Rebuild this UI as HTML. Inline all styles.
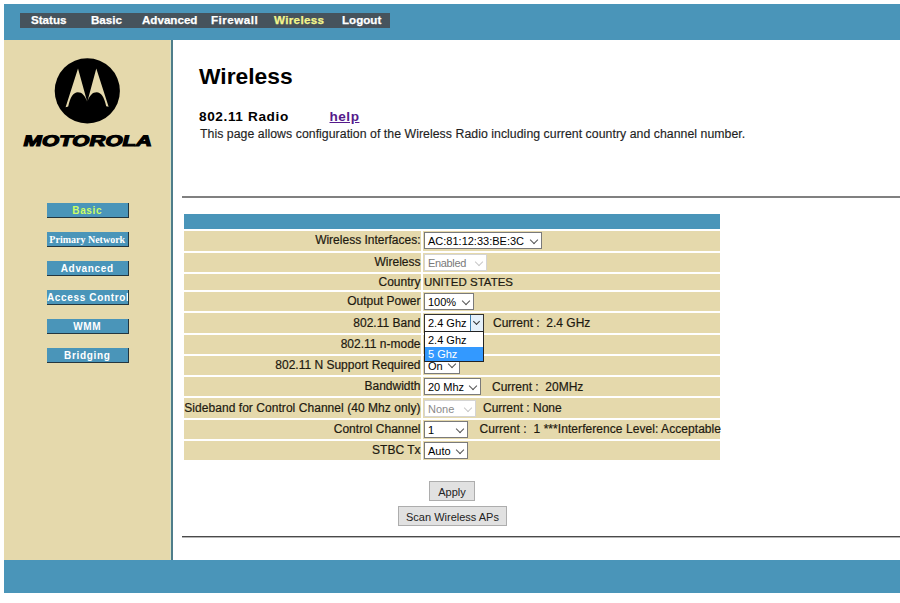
<!DOCTYPE html>
<html><head><meta charset="utf-8">
<style>
html,body{margin:0;padding:0;background:#fff;}
body{width:900px;height:603px;overflow:hidden;position:relative;font-family:"Liberation Sans",sans-serif;color:#000;}
.a{position:absolute;}
.t{position:absolute;white-space:nowrap;line-height:1;}
#hdr{left:4px;top:4px;width:896px;height:36px;background:#4a95b9;}
#nav{left:20px;top:13px;width:370px;height:15px;background:#46535c;}
.nv{position:absolute;top:13.4px;font-weight:bold;font-size:11.6px;color:#fff;-webkit-text-stroke:0.25px currentColor;line-height:13px;white-space:nowrap;}
#side{left:4px;top:40px;width:167px;height:520px;background:#e5d9ac;}
#vl{left:171px;top:40px;width:2px;height:520px;background:#4f7d8a;border-left:1px solid #dde2c6;margin-left:-1px;}
#ftr{left:4px;top:560px;width:896px;height:33px;background:#4a95b9;}
.sb{position:absolute;left:47px;width:80.5px;height:13.5px;background:#4a95b9;border-right:1.5px solid #23363f;border-bottom:1.5px solid #23363f;color:#fff;font-weight:bold;font-size:10px;letter-spacing:0.65px;line-height:16.5px;text-align:center;white-space:nowrap;overflow:hidden;}
.hr{position:absolute;left:182px;width:718px;height:2px;background:#808080;}
.row{position:absolute;left:184px;width:536px;background:#e5d9ac;}
.lab{position:absolute;left:184px;width:236.5px;text-align:right;font-size:12px;line-height:1;white-space:nowrap;color:#1e1a10;-webkit-text-stroke:0.2px #1e1a10;}
.sel{position:absolute;left:424px;height:15px;border:1px solid #7a7a7a;background:#fff;font-size:11px;line-height:15px;color:#000;box-sizing:content-box;}
.sel span{position:absolute;left:3px;top:1px;white-space:nowrap;}
.sel i{position:absolute;right:4px;top:3.5px;width:5px;height:5px;border-right:1px solid #555;border-bottom:1px solid #555;transform:rotate(45deg);}
.val{position:absolute;font-size:12px;line-height:1;white-space:nowrap;color:#1e1a10;-webkit-text-stroke:0.2px #1e1a10;}
.btn{position:absolute;background:#e1e1e1;border:1px solid #adadad;font-size:11px;line-height:20px;text-align:center;color:#222;box-sizing:border-box;}
</style></head><body>
<div id="hdr" class="a"></div>
<div id="nav" class="a"></div>
<div class="nv" style="left:31px">Status</div>
<div class="nv" style="left:91px">Basic</div>
<div class="nv" style="left:142px">Advanced</div>
<div class="nv" style="left:211px;letter-spacing:0.5px">Firewall</div>
<div class="nv" style="left:274px;color:#f4f68c;letter-spacing:0.35px">Wireless</div>
<div class="nv" style="left:342px">Logout</div>

<div id="side" class="a"></div>
<div id="vl" class="a"></div>
<svg class="a" style="left:0;top:0" width="175" height="160" viewBox="0 0 175 160">
<circle cx="87.3" cy="90.9" r="32.6" fill="#000"/>
<path d="M65.6,107.2 L78,68.6 L87.1,101.6 C85,95.5 82,92.2 77.8,92.2 C73.5,92.2 70.2,97 68.2,106.5 Z" fill="#e5d9ac"/>
<path d="M108.6,106.8 L96.3,68.6 L87.4,101.6 C89.5,95.5 92.5,92.2 96.7,92.2 C101,92.2 104.3,97 106.2,106.3 Z" fill="#e5d9ac"/>
<text x="23" y="146" font-family="Liberation Sans" font-weight="bold" font-size="15.3" textLength="128.5" lengthAdjust="spacingAndGlyphs" transform="skewX(-14) translate(36,0)" stroke="#000" stroke-width="1.1" fill="#000">MOTOROLA</text>
</svg>

<div id="ftr" class="a"></div>

<div class="sb" style="top:203px;color:#ccff66">Basic</div>
<div class="sb" style="top:232px;font-family:'Liberation Serif',serif;font-size:10px;letter-spacing:0">Primary Network</div>
<div class="sb" style="top:261px">Advanced</div>
<div class="sb" style="top:290px">Access Control</div>
<div class="sb" style="top:319px">WMM</div>
<div class="sb" style="top:348px">Bridging</div>

<div class="t" style="left:199px;top:65px;font-size:22.8px;font-weight:bold">Wireless</div>
<div class="t" style="left:199px;top:110px;font-size:13.6px;font-weight:bold;letter-spacing:0.62px">802.11 Radio</div>
<div class="t" style="left:329.5px;top:110px;font-size:13.6px;font-weight:bold;color:#551a8b;text-decoration:underline;letter-spacing:0.5px">help</div>
<div class="t" style="left:200px;top:127.5px;font-size:12.3px;color:#1f1f1f;letter-spacing:0.04px;-webkit-text-stroke:0.15px #1f1f1f">This page allows configuration of the Wireless Radio including current country and channel number.</div>

<div class="hr" style="top:196px"></div>

<div class="row" style="top:214px;height:15px;background:#4a95b9"></div>
<div class="row" style="top:231px;height:20px"></div>
<div class="row" style="top:253px;height:19px"></div>
<div class="row" style="top:274px;height:16px"></div>
<div class="row" style="top:292px;height:19px"></div>
<div class="row" style="top:313px;height:19.5px"></div>
<div class="row" style="top:334.5px;height:19.1px"></div>
<div class="row" style="top:355.6px;height:19.2px"></div>
<div class="row" style="top:376.8px;height:19.3px"></div>
<div class="row" style="top:398.1px;height:19.5px"></div>
<div class="row" style="top:419.6px;height:19.5px"></div>
<div class="row" style="top:441.1px;height:18.9px"></div>
<div class="a" style="left:421px;top:229px;width:2px;height:231px;background:#fff"></div>

<div class="lab" style="top:234px">Wireless Interfaces:</div>
<div class="lab" style="top:256px">Wireless</div>
<div class="lab" style="top:276px">Country</div>
<div class="lab" style="top:295px">Output Power</div>
<div class="lab" style="top:317px">802.11 Band</div>
<div class="lab" style="top:338px">802.11 n-mode</div>
<div class="lab" style="top:359px">802.11 N Support Required</div>
<div class="lab" style="top:380px">Bandwidth</div>
<div class="lab" style="top:401.5px;letter-spacing:0.05px">Sideband for Control Channel (40 Mhz only)</div>
<div class="lab" style="top:423px">Control Channel</div>
<div class="lab" style="top:444px">STBC Tx</div>

<div class="sel" style="top:232px;width:116px"><span>AC:81:12:33:BE:3C</span><i></i></div>
<div class="sel" style="top:254px;width:61px;border-color:#d4d4d4;color:#7a7a7a"><span style="letter-spacing:-0.35px">Enabled</span><i style="border-color:#c8c8c8"></i></div>
<div class="val" style="left:424px;top:276.5px;font-size:11.5px">UNITED STATES</div>
<div class="sel" style="top:293px;width:48px"><span>100%</span><i></i></div>
<div class="sel" style="top:356.5px;width:34px"><span>On</span><i></i></div>
<div class="sel" style="top:378px;width:55px"><span>20 Mhz</span><i></i></div>
<div class="sel" style="top:400px;width:50px;border-color:#d4d4d4;color:#8a8a8a"><span>None</span><i style="border-color:#c8c8c8"></i></div>
<div class="sel" style="top:421px;width:42px"><span>1</span><i></i></div>
<div class="sel" style="top:442px;width:42px"><span>Auto</span><i></i></div>

<div class="val" style="left:493px;top:317px">Current :&nbsp; 2.4 GHz</div>
<div class="val" style="left:492px;top:381px">Current :&nbsp; 20MHz</div>
<div class="val" style="left:483px;top:402px">Current : None</div>
<div class="val" style="left:479.5px;top:423px;letter-spacing:0.06px">Current :&nbsp; 1 ***Interference Level: Acceptable</div>

<!-- open dropdown -->
<div class="a" style="left:424px;top:314px;width:58px;height:16px;border:1px solid #333;background:#fff;box-sizing:content-box">
  <span class="a" style="left:3px;top:2px;font-size:11px;line-height:13px;white-space:nowrap">2.4 Ghz</span>
  <div class="a" style="left:45px;top:0;width:12px;height:16px;background:#e5f1fb;border-left:1px solid #3c7fb1"><i class="a" style="left:3px;top:4px;width:4px;height:4px;border-right:1.2px solid #333;border-bottom:1.2px solid #333;transform:rotate(45deg)"></i></div>
</div>
<div class="a" style="left:424px;top:331px;width:58px;height:29px;border:1px solid #222;background:#fff;">
  <span class="a" style="left:3px;top:2px;font-size:11px;line-height:13px;white-space:nowrap">2.4 Ghz</span>
  <div class="a" style="left:0;top:15px;width:58px;height:14px;background:#3399ff;color:#fff"><span class="a" style="left:3px;top:1px;font-size:11px;line-height:13px;white-space:nowrap">5 Ghz</span></div>
</div>

<div class="btn" style="left:429px;top:481px;width:46px;height:20px">Apply</div>
<div class="btn" style="left:398px;top:506px;width:109px;height:20px">Scan Wireless APs</div>

<div class="hr" style="top:536px;height:1px;background:#4a4a4a"></div><div class="hr" style="top:537px;height:1px;background:#b5b5b5"></div>
</body></html>
